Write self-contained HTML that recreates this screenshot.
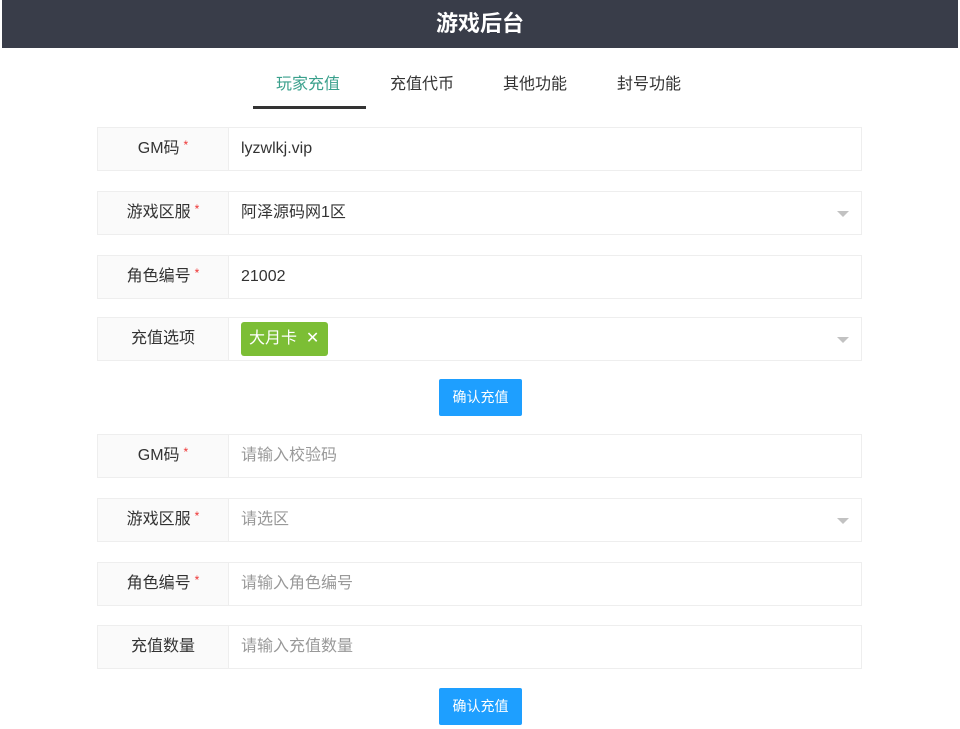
<!DOCTYPE html>
<html><head><meta charset="utf-8"><style>
*{box-sizing:border-box;margin:0;padding:0}
body{width:960px;height:729px;background:#fff;font-family:"Liberation Sans","Noto Sans CJK SC",sans-serif;position:relative;overflow:hidden;color:#333}
.hd{position:absolute;left:2px;top:0;width:956px;height:48px;background:#393d49;color:#fff;font-size:22px;font-weight:bold;text-align:center;line-height:48px}
.tab{position:absolute;top:72px;font-size:16px;color:#333;line-height:26px}
.ul{position:absolute;left:253px;top:106px;width:113px;height:3px;background:#333}
.row{position:absolute;left:97px;width:765px;height:44px;border:1px solid #eee;display:flex}
.lb{width:131px;background:#fafafa;border-right:1px solid #eee;text-align:center;line-height:42px;font-size:16px;color:#333}
.lb i{color:#e33;font-style:normal;font-size:12px;position:relative;top:-4px;margin-left:4px;line-height:0}
.in{flex:1;padding-left:12px;line-height:42px;font-size:16px;color:#333;position:relative}
.in.ph{color:#999}
.car{position:absolute;right:12px;top:19px;width:0;height:0;border:6px solid transparent;border-top:6px solid #c2c2c2}
.tag{position:absolute;left:12px;top:4px;width:87px;height:34px;background:#7cbe35;border-radius:3px;color:#fff;line-height:34px;padding-left:8px;font-size:16px}
.btn{position:absolute;left:439px;width:83px;height:37px;background:#1e9fff;border-radius:2px;color:#fff;font-size:14px;text-align:center;line-height:37px}
</style></head><body>
<div class="hd">游戏后台</div>
<div class="tab" style="left:276px;color:#3aa08c">玩家充值</div>
<div class="tab" style="left:390px">充值代币</div>
<div class="tab" style="left:503px">其他功能</div>
<div class="tab" style="left:617px">封号功能</div>
<div class="ul"></div>

<div class="row" style="top:127px"><div class="lb">GM码<i>*</i></div><div class="in">lyzwlkj.vip</div></div>
<div class="row" style="top:191px"><div class="lb">游戏区服<i>*</i></div><div class="in">阿泽源码网1区<span class="car"></span></div></div>
<div class="row" style="top:255px"><div class="lb">角色编号<i>*</i></div><div class="in">21002</div></div>
<div class="row" style="top:317px"><div class="lb">充值选项</div><div class="in"><span class="tag">大月卡 &nbsp;✕</span><span class="car"></span></div></div>
<div class="btn" style="top:379px">确认充值</div>

<div class="row" style="top:434px"><div class="lb">GM码<i>*</i></div><div class="in ph">请输入校验码</div></div>
<div class="row" style="top:498px"><div class="lb">游戏区服<i>*</i></div><div class="in ph">请选区<span class="car"></span></div></div>
<div class="row" style="top:562px"><div class="lb">角色编号<i>*</i></div><div class="in ph">请输入角色编号</div></div>
<div class="row" style="top:625px"><div class="lb">充值数量</div><div class="in ph">请输入充值数量</div></div>
<div class="btn" style="top:688px">确认充值</div>
</body></html>
